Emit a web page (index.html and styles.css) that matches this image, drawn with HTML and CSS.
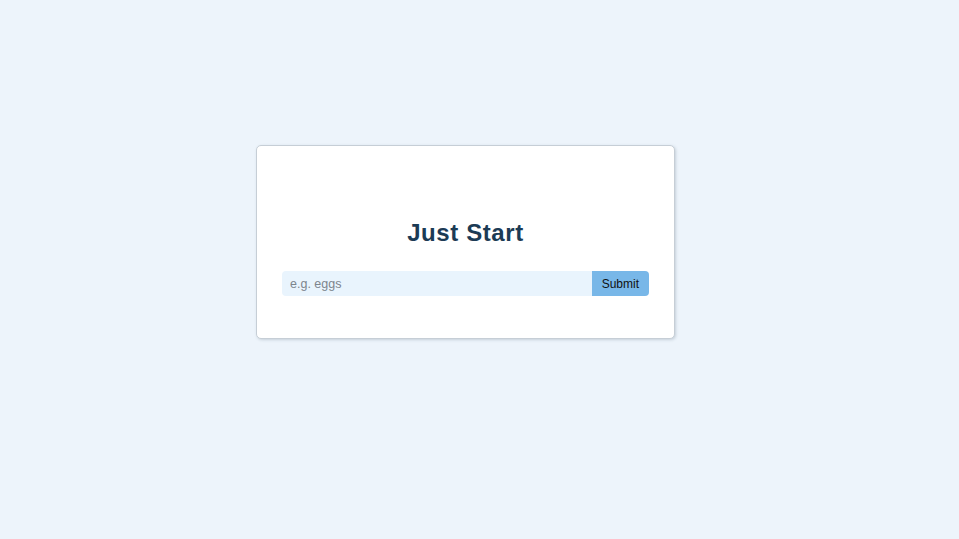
FILE: index.html
```html
<!DOCTYPE html>
<html lang="en">
<head>
<meta charset="utf-8">
<title>Just Start</title>
<link rel="stylesheet" href="styles.css">
</head>
<body>
<main class="page">
  <section class="card">
    <h1 class="title">Just Start</h1>
    <form class="entry" onsubmit="return false">
      <input class="entry-input" type="text" placeholder="e.g. eggs">
      <button class="entry-button" type="submit">Submit</button>
    </form>
  </section>
</main>
</body>
</html>
```
FILE: styles.css
```css
html, body {
  margin: 0;
  padding: 0;
  background: #edf4fb;
  font-family: "Liberation Sans", Arial, sans-serif;
}
.page {
  min-height: 539px;
  box-sizing: border-box;
  padding: 145px 28px 0 0;
  display: flex;
  justify-content: center;
  align-items: flex-start;
}
.card {
  width: 419px;
  height: 194px;
  box-sizing: border-box;
  background: #ffffff;
  border: 1px solid #c6ced6;
  border-radius: 5px;
  box-shadow: 1px 1px 3px rgba(60, 80, 100, 0.22);
  padding: 73px 25px 42px;
  display: flex;
  flex-direction: column;
}
.title {
  margin: 0 0 24px;
  font-size: 24px;
  line-height: 28px;
  font-weight: bold;
  letter-spacing: 0.6px;
  text-align: center;
  color: #1c3b55;
}
.entry {
  display: flex;
  height: 25px;
  margin: 0;
}
.entry-input {
  flex: 1;
  min-width: 0;
  height: 25px;
  box-sizing: border-box;
  border: none;
  outline: none;
  background: #e9f4fd;
  border-radius: 4px 0 0 4px;
  padding: 0 8px;
  font-family: "Liberation Sans", Arial, sans-serif;
  font-size: 12.5px;
  color: #333;
}
.entry-input::placeholder {
  color: #7d858d;
}
.entry-button {
  height: 25px;
  box-sizing: border-box;
  border: none;
  background: #78b7e8;
  border-radius: 0 4px 4px 0;
  padding: 0 10px;
  font-family: "Liberation Sans", Arial, sans-serif;
  font-size: 12px;
  color: #111;
  cursor: pointer;
}
```
